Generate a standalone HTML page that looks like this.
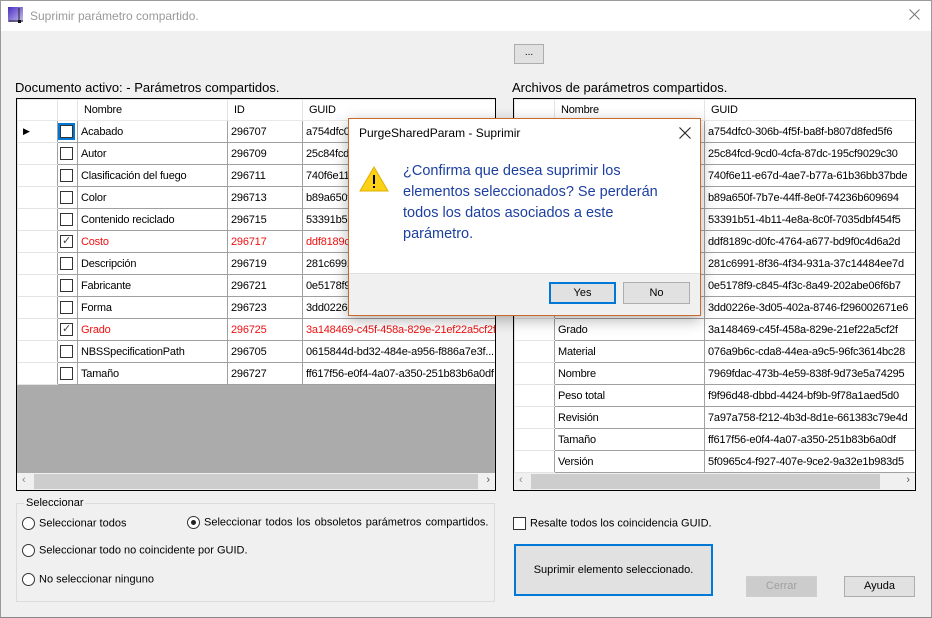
<!DOCTYPE html>
<html><head><meta charset="utf-8"><style>
*{box-sizing:border-box;margin:0;padding:0}
body{width:932px;height:618px;background:#f0f0f0;font-family:"Liberation Sans",sans-serif;font-size:11px;color:#000;position:relative;overflow:hidden}
.abs{position:absolute}
.win{left:0;top:0;width:932px;height:618px;border:1px solid #9a9a9a;border-bottom-color:#888}
.title{left:1px;top:1px;width:930px;height:30px;background:#fff}
table{border-collapse:collapse;table-layout:fixed;background:#fff}
td{height:22px;border:1px solid #a0a0a0;padding:0 3px;white-space:nowrap;overflow:hidden;font-size:11px;letter-spacing:-0.2px}
td.rh{border-color:#e4e4e4;border-right:1px solid #a0a0a0;background:#fff}
tr.h td{height:21px;border-color:#e8e8e8;border-right-color:#e4e4e4;padding-left:6px}
.cb{display:inline-block;width:13px;height:13px;border:1px solid #333;vertical-align:middle;background:#fff;position:relative}
.red td{color:#f01010}
.grid{border:1px solid #000;background:#ababab;overflow:hidden}
.sb{position:absolute;left:0;right:0;bottom:0;height:17px;background:#f0f0f0}
.sb .th{position:absolute;left:17px;right:17px;top:1px;height:15px;background:#cdcdcd}
.btn{position:absolute;background:#e1e1e1;border:1px solid #adadad;text-align:center;font-size:11px}
.radio{display:inline-block;width:13px;height:13px;border:1px solid #333;border-radius:50%;vertical-align:middle;background:#fff;position:relative;margin-right:4px}
</style></head><body>
<div class="abs win"></div>
<div class="abs title"></div>
<svg class="abs" style="left:8px;top:7px" width="16" height="16"><defs><linearGradient id="g" x1="0" y1="0" x2="1" y2="1"><stop offset="0" stop-color="#4a2cc0"/><stop offset="1" stop-color="#c8c0f0"/></linearGradient></defs><rect x="0" y="0" width="15" height="15" fill="url(#g)"/><path d="M1 14H15M11 1V15" stroke="#222" stroke-width="1"/><rect x="10" y="13" width="3" height="3" fill="#111"/></svg>
<div class="abs" style="left:30px;top:9px;color:#999;font-size:12px">Suprimir parámetro compartido.</div>
<svg class="abs" style="left:909px;top:9px" width="11" height="11"><path d="M0.5 0.5L10.5 10.5M10.5 0.5L0.5 10.5" stroke="#777" stroke-width="1"/></svg>

<div class="btn" style="left:514px;top:44px;width:30px;height:20px;line-height:16px;font-size:10px">...</div>

<div class="abs" style="left:15px;top:80px;font-size:13px">Documento activo: - Parámetros compartidos.</div>
<div class="abs" style="left:512px;top:80px;font-size:13px">Archivos de parámetros compartidos.</div>

<div class="abs grid" style="left:16px;top:98px;width:480px;height:393px">
<table style="width:600px"><colgroup><col style="width:40px"><col style="width:20px"><col style="width:150px"><col style="width:75px"><col style="width:315px"></colgroup>
<tr class="h"><td class="rh"></td><td></td><td>Nombre</td><td>ID</td><td>GUID</td></tr>
<tr><td class="rh" style="font-size:9px;padding-left:5px">▶</td><td style="padding:0 2px"><span class="cb" style="outline:2px solid #0078d7"></span></td><td>Acabado</td><td>296707</td><td>a754dfc0-306b-4f5f-ba8f-b807d8fed5f6</td></tr>
<tr><td class="rh"></td><td style="padding:0 2px"><span class="cb"></span></td><td>Autor</td><td>296709</td><td>25c84fcd-9cd0-4cfa-87dc-195cf9029c30</td></tr>
<tr><td class="rh"></td><td style="padding:0 2px"><span class="cb"></span></td><td>Clasificación del fuego</td><td>296711</td><td>740f6e11-e67d-4ae7-b77a-61b36bb37bde</td></tr>
<tr><td class="rh"></td><td style="padding:0 2px"><span class="cb"></span></td><td>Color</td><td>296713</td><td>b89a650f-7b7e-44ff-8e0f-74236b609694</td></tr>
<tr><td class="rh"></td><td style="padding:0 2px"><span class="cb"></span></td><td>Contenido reciclado</td><td>296715</td><td>53391b51-4b11-4e8a-8c0f-7035dbf454f5</td></tr>
<tr class="red"><td class="rh"></td><td style="padding:0 2px"><span class="cb" style="color:#444;font-size:11px;line-height:11px;text-align:center">✓</span></td><td>Costo</td><td>296717</td><td>ddf8189c-d0fc-4764-a677-bd9f0c4d6a2d</td></tr>
<tr><td class="rh"></td><td style="padding:0 2px"><span class="cb"></span></td><td>Descripción</td><td>296719</td><td>281c6991-8f36-4f34-931a-37c14484ee7d</td></tr>
<tr><td class="rh"></td><td style="padding:0 2px"><span class="cb"></span></td><td>Fabricante</td><td>296721</td><td>0e5178f9-c845-4f3c-8a49-202abe06f6b7</td></tr>
<tr><td class="rh"></td><td style="padding:0 2px"><span class="cb"></span></td><td>Forma</td><td>296723</td><td>3dd0226e-3d05-402a-8746-f296002671e6</td></tr>
<tr class="red"><td class="rh"></td><td style="padding:0 2px"><span class="cb" style="color:#444;font-size:11px;line-height:11px;text-align:center">✓</span></td><td>Grado</td><td>296725</td><td>3a148469-c45f-458a-829e-21ef22a5cf2f</td></tr>
<tr><td class="rh"></td><td style="padding:0 2px"><span class="cb"></span></td><td>NBSSpecificationPath</td><td>296705</td><td>0615844d-bd32-484e-a956-f886a7e3f...</td></tr>
<tr><td class="rh"></td><td style="padding:0 2px"><span class="cb"></span></td><td>Tamaño</td><td>296727</td><td>ff617f56-e0f4-4a07-a350-251b83b6a0df</td></tr>
</table>
<div class="sb"><div class="th"></div><span class="abs" style="left:5px;top:1px;color:#888">‹</span><span class="abs" style="right:5px;top:1px;color:#555">›</span></div>
</div>

<div class="abs grid" style="left:513px;top:98px;width:403px;height:393px">
<table style="width:402px"><colgroup><col style="width:40px"><col style="width:150px"><col style="width:212px"></colgroup>
<tr class="h"><td class="rh"></td><td>Nombre</td><td>GUID</td></tr>
<tr><td class="rh"></td><td>Acabado</td><td>a754dfc0-306b-4f5f-ba8f-b807d8fed5f6</td></tr>
<tr><td class="rh"></td><td>Autor</td><td>25c84fcd-9cd0-4cfa-87dc-195cf9029c30</td></tr>
<tr><td class="rh"></td><td>Clasificación del fuego</td><td>740f6e11-e67d-4ae7-b77a-61b36bb37bde</td></tr>
<tr><td class="rh"></td><td>Color</td><td>b89a650f-7b7e-44ff-8e0f-74236b609694</td></tr>
<tr><td class="rh"></td><td>Contenido reciclado</td><td>53391b51-4b11-4e8a-8c0f-7035dbf454f5</td></tr>
<tr><td class="rh"></td><td>Costo</td><td>ddf8189c-d0fc-4764-a677-bd9f0c4d6a2d</td></tr>
<tr><td class="rh"></td><td>Descripción</td><td>281c6991-8f36-4f34-931a-37c14484ee7d</td></tr>
<tr><td class="rh"></td><td>Fabricante</td><td>0e5178f9-c845-4f3c-8a49-202abe06f6b7</td></tr>
<tr><td class="rh"></td><td>Forma</td><td>3dd0226e-3d05-402a-8746-f296002671e6</td></tr>
<tr><td class="rh"></td><td>Grado</td><td>3a148469-c45f-458a-829e-21ef22a5cf2f</td></tr>
<tr><td class="rh"></td><td>Material</td><td>076a9b6c-cda8-44ea-a9c5-96fc3614bc28</td></tr>
<tr><td class="rh"></td><td>Nombre</td><td>7969fdac-473b-4e59-838f-9d73e5a74295</td></tr>
<tr><td class="rh"></td><td>Peso total</td><td>f9f96d48-dbbd-4424-bf9b-9f78a1aed5d0</td></tr>
<tr><td class="rh"></td><td>Revisión</td><td>7a97a758-f212-4b3d-8d1e-661383c79e4d</td></tr>
<tr><td class="rh"></td><td>Tamaño</td><td>ff617f56-e0f4-4a07-a350-251b83b6a0df</td></tr>
<tr><td class="rh"></td><td>Versión</td><td>5f0965c4-f927-407e-9ce2-9a32e1b983d5</td></tr>
</table>
<div class="sb"><div class="th" style="right:35px"></div><span class="abs" style="left:5px;top:1px;color:#888">‹</span><span class="abs" style="right:5px;top:1px;color:#555">›</span></div>
</div>

<div class="abs" style="left:16px;top:503px;width:479px;height:99px;border:1px solid #dcdcdc"></div>
<div class="abs" style="left:24px;top:497px;background:#f0f0f0;padding:0 2px">Seleccionar</div>
<div class="abs" style="left:22px;top:517px"><span class="radio"></span>Seleccionar todos</div>
<div class="abs" style="left:187px;top:516px;word-spacing:1px"><span class="radio"><span class="abs" style="left:3px;top:3px;width:5px;height:5px;border-radius:50%;background:#222"></span></span>Seleccionar todos los obsoletos parámetros compartidos.</div>
<div class="abs" style="left:22px;top:544px"><span class="radio"></span>Seleccionar todo no coincidente por GUID.</div>
<div class="abs" style="left:22px;top:573px"><span class="radio"></span>No seleccionar ninguno</div>

<div class="abs" style="left:513px;top:517px"><span class="cb" style="margin-right:4px"></span>Resalte todos los coincidencia GUID.</div>
<div class="btn" style="left:514px;top:544px;width:199px;height:52px;line-height:48px;border:2px solid #0078d7">Suprimir elemento seleccionado.</div>
<div class="btn" style="left:746px;top:576px;width:71px;height:21px;line-height:19px;color:#a0a0a0;border-color:#cfcfcf;background:#ccc">Cerrar</div>
<div class="btn" style="left:844px;top:576px;width:71px;height:21px;line-height:19px">Ayuda</div>

<!-- dialog -->
<div class="abs" style="left:348px;top:118px;width:353px;height:198px;border:1px solid #c8692e;background:#fff;box-shadow:0 4px 14px rgba(0,0,0,.3)">
<div class="abs" style="left:10px;top:7px;font-size:12px">PurgeSharedParam - Suprimir</div>
<svg class="abs" style="left:330px;top:8px" width="12" height="12"><path d="M0.5 0.5L11.5 11.5M11.5 0.5L0.5 11.5" stroke="#222" stroke-width="1.1"/></svg>
<svg class="abs" style="left:10px;top:46px" width="30" height="28"><path d="M15 2L29 26H1Z" fill="#fcd116" stroke="#e0b000"/><rect x="14" y="10" width="2" height="9" fill="#000"/><rect x="14" y="21" width="2" height="2" fill="#000"/></svg>
<div class="abs" style="left:54px;top:42px;width:285px;color:#1c3fa0;font-size:14.5px;line-height:21px">¿Confirma que desea suprimir los<br>elementos seleccionados? Se perderán<br>todos los datos asociados a este<br>parámetro.</div>
<div class="abs" style="left:0;top:154px;width:351px;height:42px;background:#f0f0f0;border-top:1px solid #e0e0e0"></div>
<div class="btn" style="left:200px;top:163px;width:67px;height:22px;line-height:18px;border:2px solid #0078d7">Yes</div>
<div class="btn" style="left:274px;top:163px;width:67px;height:22px;line-height:20px">No</div>
</div>
</body></html>
